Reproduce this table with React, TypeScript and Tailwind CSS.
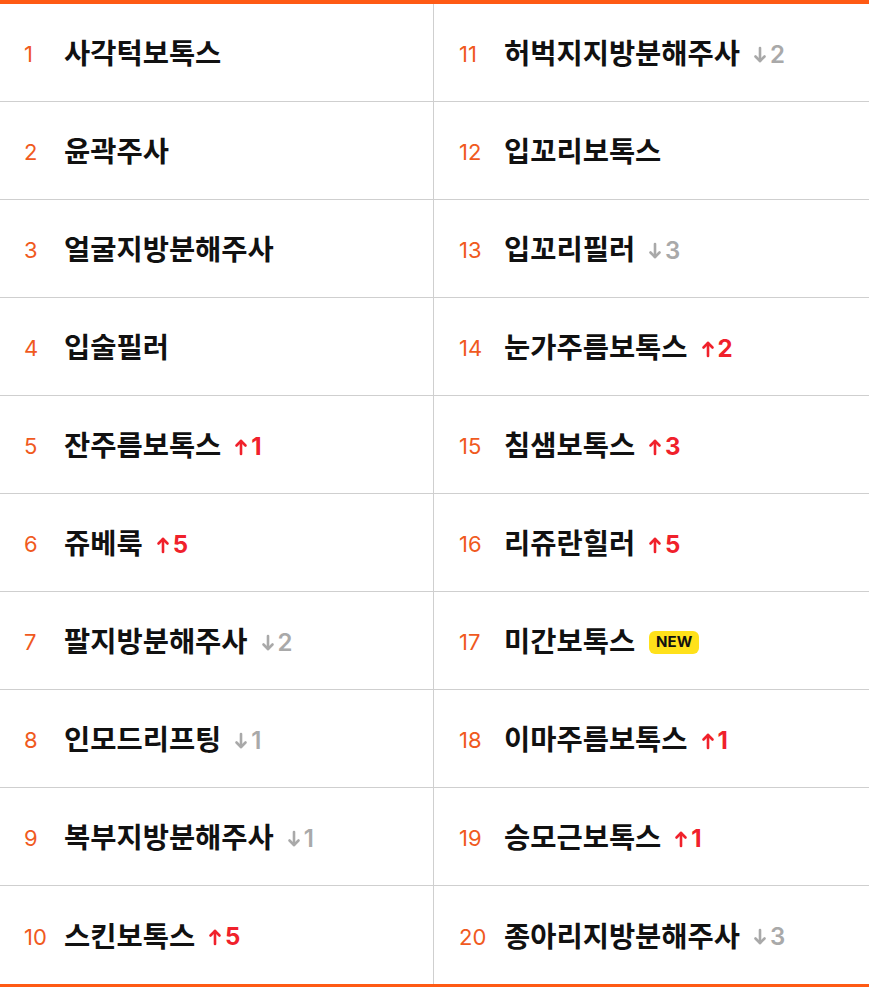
import React from "react";

type Change = { dir: "up" | "down" | "new"; n?: number } | null;

const left: [string, Change][] = [
  ["사각턱보톡스", null],
  ["윤곽주사", null],
  ["얼굴지방분해주사", null],
  ["입술필러", null],
  ["잔주름보톡스", { dir: "up", n: 1 }],
  ["쥬베룩", { dir: "up", n: 5 }],
  ["팔지방분해주사", { dir: "down", n: 2 }],
  ["인모드리프팅", { dir: "down", n: 1 }],
  ["복부지방분해주사", { dir: "down", n: 1 }],
  ["스킨보톡스", { dir: "up", n: 5 }],
];

const right: [string, Change][] = [
  ["허벅지지방분해주사", { dir: "down", n: 2 }],
  ["입꼬리보톡스", null],
  ["입꼬리필러", { dir: "down", n: 3 }],
  ["눈가주름보톡스", { dir: "up", n: 2 }],
  ["침샘보톡스", { dir: "up", n: 3 }],
  ["리쥬란힐러", { dir: "up", n: 5 }],
  ["미간보톡스", { dir: "new" }],
  ["이마주름보톡스", { dir: "up", n: 1 }],
  ["승모근보톡스", { dir: "up", n: 1 }],
  ["종아리지방분해주사", { dir: "down", n: 3 }],
];

const Arrow = ({ up }: { up: boolean }) => (
  <svg width="14" height="18" viewBox="0 0 14 18" fill="none" stroke="currentColor" strokeWidth="2.6" strokeLinecap="round" strokeLinejoin="round">
    {up ? (
      <>
        <path d="M7 16V3" />
        <path d="M2.5 7.5L7 3l4.5 4.5" />
      </>
    ) : (
      <>
        <path d="M7 2v13" />
        <path d="M2.5 10.5L7 15l4.5-4.5" />
      </>
    )}
  </svg>
);

const Badge = ({ c }: { c: Change }) => {
  if (!c) return null;
  if (c.dir === "new")
    return (
      <span className="ml-[14px] flex h-[23px] items-center rounded-[6px] bg-[#ffe11a] px-[7px] text-[15px] font-bold text-[#111]">
        NEW
      </span>
    );
  const up = c.dir === "up";
  return (
    <span className={`ml-[13px] flex items-center gap-[3px] text-[24px] leading-none ${up ? "font-bold text-[#f0212b]" : "font-semibold text-[#a9a9a9]"}`}>
      <Arrow up={up} />
      {c.n}
    </span>
  );
};

const Cell = ({ rank, name, change, numW, pl }: { rank: number; name: string; change: Change; numW: string; pl: string }) => (
  <div className={`flex h-[98px] items-center border-b border-[#cfcfcf] pt-[4px] last:border-b-0 ${pl}`}>
    <span className={`${numW} text-[22px] text-[#f05a1e]`}>{rank}</span>
    <span className="text-[28.5px] font-bold text-[#111]">{name}</span>
    <Badge c={change} />
  </div>
);

export default function App() {
  return (
    <div
      className="w-[869px] border-y-4 border-[#ff5a14] bg-white"
      style={{ fontFamily: "Inter, 'Noto Sans CJK KR', sans-serif" }}
    >
      <div className="grid grid-cols-[434px_1fr]">
        <div className="flex flex-col border-r border-[#cfcfcf]">
          {left.map(([name, c], i) => (
            <Cell key={i} rank={i + 1} name={name} change={c} numW="w-[40px]" pl="pl-[24px]" />
          ))}
        </div>
        <div className="flex flex-col">
          {right.map(([name, c], i) => (
            <Cell key={i} rank={i + 11} name={name} change={c} numW="w-[45px]" pl="pl-[25px]" />
          ))}
        </div>
      </div>
    </div>
  );
}
